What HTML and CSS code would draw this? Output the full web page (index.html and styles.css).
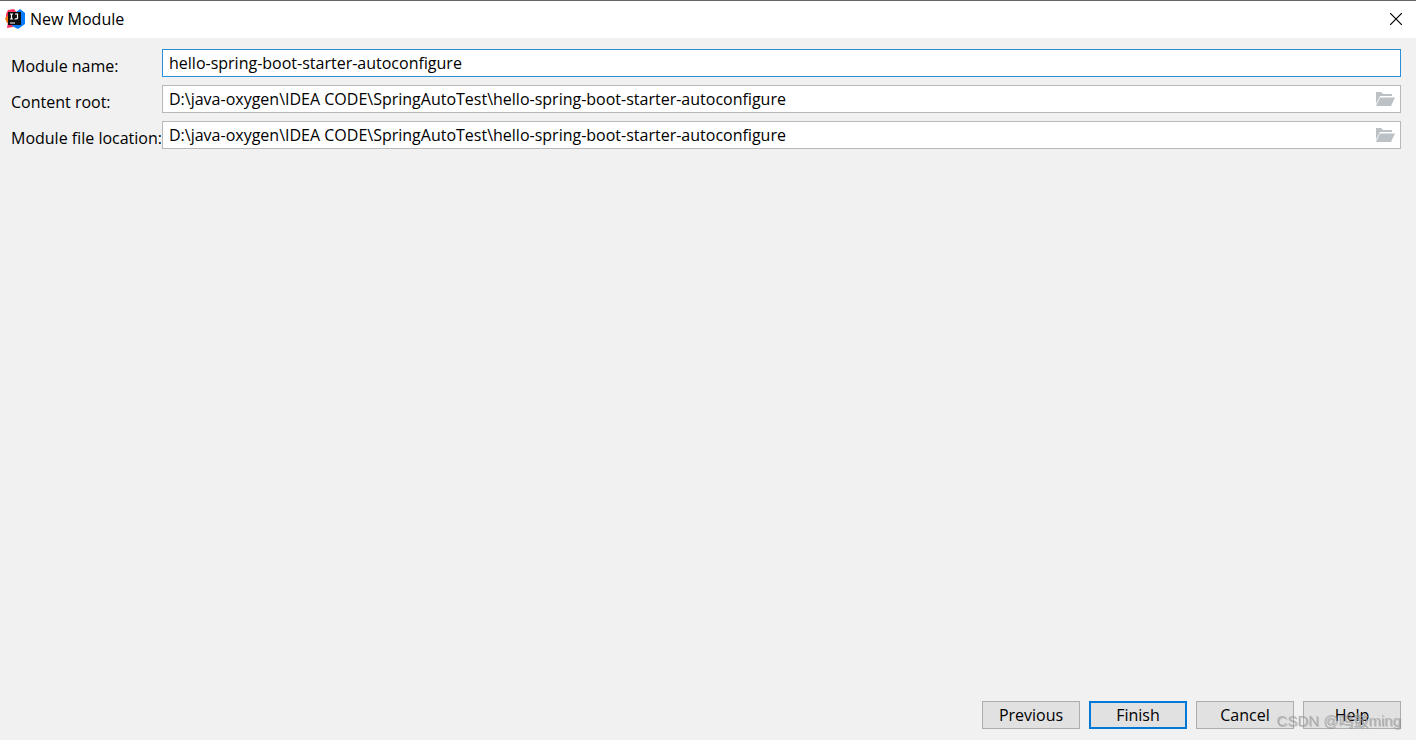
FILE: index.html
```
<!DOCTYPE html>
<html lang="en">
<head>
    <meta charset="UTF-8">
    <meta name="viewport" content="width=device-width, initial-scale=1.0">
    <title>New Module</title>
    <link rel="stylesheet" href="styles.css">
</head>
<body>

    <header class="titlebar">
        <svg class="logo" viewBox="0 0 20 20" aria-hidden="true">
            <path d="M1 5 L3 1 L9 0 L12 4 L8 18 L2 19 L3 13 L1 11 Z" fill="#fe315d"/>
            <path d="M0 9 L5 5 L6 14 L2 14 L1 12 Z" fill="#f97a12"/>
            <path d="M11 3 L15 0 L20 4 L20 15 L13 20 L7 17 Z" fill="#087cfa"/>
            <path d="M3 3 H16 V16 H3 Z" fill="#101010"/>
            <path d="M5 5 H8 M6.500 5 V10 M5 10 H8 M10 5 H13 M12.500 5 V9 Q12.500 10 9.500 10 M5 14 H10" fill="none" stroke="#fff" stroke-width="1.2"/>
        </svg>
        <h1>New Module</h1>
        <button type="button" class="close" aria-label="Close">
            <svg viewBox="0 0 12 12"><path d="M0 0 L12 12 M12 0 L0 12" stroke="#000" stroke-width="1.2"/></svg>
        </button>
    </header>

    <form id="moduleForm" class="module-form">
        <div class="fields">
            <label for="name">Module name:</label>
            <div class="field active">
                <input type="text" id="name" name="name" value="hello-spring-boot-starter-autoconfigure">
            </div>

            <label for="root">Content root:</label>
            <div class="field">
                <input type="text" id="root" name="root" value="D:\java-oxygen\IDEA CODE\SpringAutoTest\hello-spring-boot-starter-autoconfigure">
                <button type="button" class="browse" aria-label="Browse content root">
                    <svg viewBox="0 0 20 16"><path d="M1 1 H6 L8 3 H17 V5 H5 L1 13 Z M5 6.500 H20 L16 15 H1 Z" fill="#bcc1c5"/></svg>
                </button>
            </div>

            <label for="location">Module file location:</label>
            <div class="field">
                <input type="text" id="location" name="location" value="D:\java-oxygen\IDEA CODE\SpringAutoTest\hello-spring-boot-starter-autoconfigure">
                <button type="button" class="browse" aria-label="Browse module file location">
                    <svg viewBox="0 0 20 16"><path d="M1 1 H6 L8 3 H17 V5 H5 L1 13 Z M5 6.500 H20 L16 15 H1 Z" fill="#bcc1c5"/></svg>
                </button>
            </div>
        </div>

        <div class="actions">
            <button type="button">Previous</button>
            <button type="submit" class="default">Finish</button>
            <button type="button">Cancel</button>
            <button type="button">Help</button>
        </div>
    </form>

    <div class="watermark">CSDN @鸣鼓ming</div>

</body>
</html>
```
FILE: styles.css
```
* {
    box-sizing: border-box;
}

body {
    display: flex;
    flex-direction: column;
    min-height: 100vh;
    margin: 0;
    font-family: "Open Sans", "Noto Sans CJK SC", sans-serif;
    font-size: 16px;
    color: #000;
    background-color: #f1f1f1;
}

button, input {
    font: inherit;
    color: inherit;
}

/* Title bar */
.titlebar {
    display: flex;
    align-items: center;
    height: 38px;
    padding: 0 14px 1px 5px;
    border-top: 1px solid #666;
    background-color: #fff;
}

.logo {
    width: 20px;
    height: 20px;
}

.titlebar h1 {
    flex: 1;
    margin: 0 0 0 5px;
    font-size: 16px;
    font-weight: normal;
}

.close {
    display: flex;
    padding: 0;
    border: none;
    background: none;
}

.close svg {
    width: 12px;
    height: 12px;
}

/* Form */
.module-form {
    display: flex;
    flex: 1;
    flex-direction: column;
    justify-content: space-between;
    padding: 11px 15px 11px 11px;
}

.fields {
    display: grid;
    grid-template-columns: 151px 1fr;
    row-gap: 8px;
}

.fields label {
    padding-top: 6px;
    line-height: 22px;
    white-space: nowrap;
}

.field {
    display: flex;
    align-items: center;
    height: 28px;
    border: 1px solid #b8b8b8;
    background-color: #fff;
}

.field.active {
    border-color: #2a8edb;
}

.field input {
    flex: 1;
    min-width: 0;
    height: 26px;
    padding: 0 6px 1px;
    border: none;
    outline: none;
    background: none;
}

.browse {
    display: flex;
    padding: 0;
    margin-right: 5px;
    border: none;
    background: none;
}

.browse svg {
    width: 20px;
    height: 16px;
}

/* Bottom buttons */
.actions {
    display: flex;
    justify-content: flex-end;
    gap: 9px;
}

.actions button {
    width: 98px;
    height: 28px;
    padding: 0;
    border: 1px solid #adadad;
    line-height: 22px;
    background-color: #e1e1e1;
}

.actions .default {
    border: 2px solid #0078d7;
}

.watermark {
    position: fixed;
    right: 15px;
    bottom: 8px;
    font-family: "Liberation Sans", "Noto Sans CJK SC", sans-serif;
    font-size: 15px;
    line-height: 22px;
    color: rgba(160, 160, 160, 0.7);
    text-shadow: 1px 1px 0 rgba(100, 100, 100, 0.3);
    pointer-events: none;
}
```
